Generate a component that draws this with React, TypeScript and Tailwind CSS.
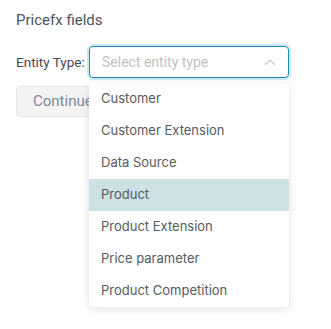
import React from "react";

const items = [
  "Customer",
  "Customer Extension",
  "Data Source",
  "Product",
  "Product Extension",
  "Price parameter",
  "Product Competition",
];

export default function App() {
  return (
    <div className="w-[331px] h-[329px] bg-white px-4 pt-[10px]" style={{ fontFamily: "Roboto, 'Liberation Sans', sans-serif" }}>
      <div className="text-[15px] leading-5 text-[#4b5560]">Pricefx fields</div>
      <div className="mt-[16px] flex items-center">
        <span className="text-[13.5px] text-[#444b52] w-[73px]">Entity Type:</span>
        <div className="relative">
          <div className="w-[200px] h-[32px] rounded-[4px] border border-[#1b89b0] ring-2 ring-[#cbe7f0] flex items-center pl-3 pr-3 justify-between">
            <span className="text-[14px] text-[#c2c2c2]">Select entity type</span>
            <svg width="12" height="8" viewBox="0 0 12 8" fill="none">
              <path d="M1 7 L6 2 L11 7" stroke="#c8c8c8" strokeWidth="1.2" />
            </svg>
          </div>
          <div className="absolute left-0 top-[37px] w-[200px] bg-white rounded-[4px] shadow-[0_2px_8px_rgba(0,0,0,0.12)] z-10" style={{ fontFamily: "Inter, sans-serif" }}>
            {items.map((it) => (
              <div
                key={it}
                className={`h-[32px] flex items-center pl-3 text-[13px] text-[#555b60] ${it === "Product" ? "bg-[#cde1e4]" : ""}`}
              >
                {it}
              </div>
            ))}
          </div>
        </div>
      </div>
      <div className="mt-[8px]">
        <button className="h-[31px] px-4 rounded-[4px] bg-[#f4f4f4] border border-[#e6e6e6] text-[15px] text-[#7a8b9c]">Continue</button>
      </div>
    </div>
  );
}
